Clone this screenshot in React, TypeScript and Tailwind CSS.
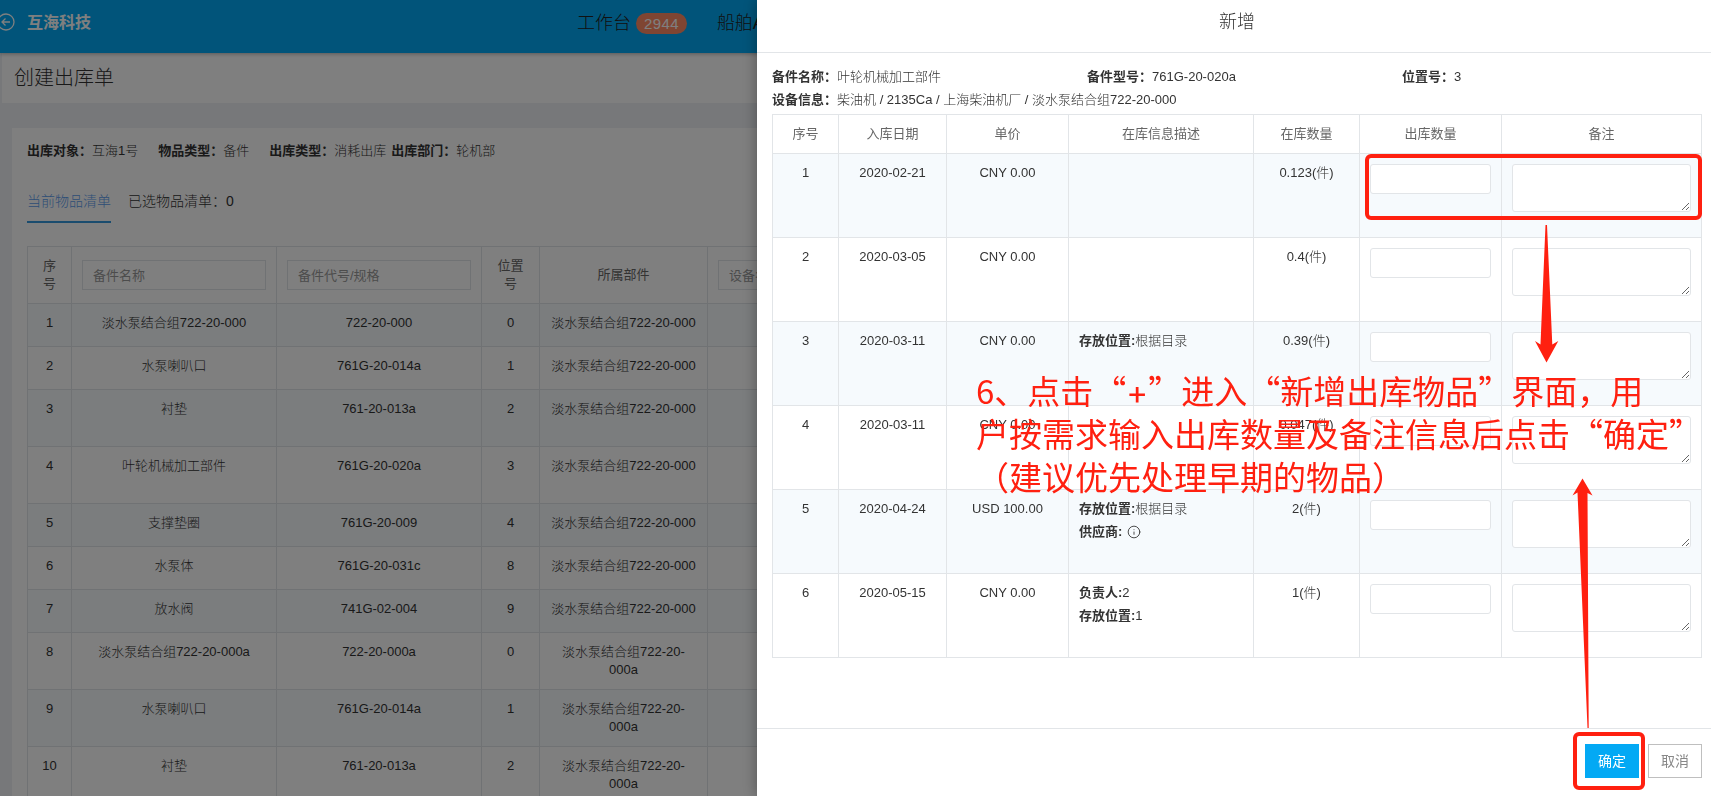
import { Info } from 'lucide-react';

type Part = {
  no: number;
  name: string;
  code: string;
  position: number;
  parent: string;
  tall?: boolean;
};

type Stock = {
  no: number;
  date: string;
  price: string;
  location?: string;
  owner?: string;
  supplier?: boolean;
  amount: string;
};

const parts: Part[] = [
  { no: 1, name: '淡水泵结合组722-20-000', code: '722-20-000', position: 0, parent: '淡水泵结合组722-20-000' },
  { no: 2, name: '水泵喇叭口', code: '761G-20-014a', position: 1, parent: '淡水泵结合组722-20-000' },
  { no: 3, name: '衬垫', code: '761-20-013a', position: 2, parent: '淡水泵结合组722-20-000', tall: true },
  { no: 4, name: '叶轮机械加工部件', code: '761G-20-020a', position: 3, parent: '淡水泵结合组722-20-000', tall: true },
  { no: 5, name: '支撑垫圈', code: '761G-20-009', position: 4, parent: '淡水泵结合组722-20-000' },
  { no: 6, name: '水泵体', code: '761G-20-031c', position: 8, parent: '淡水泵结合组722-20-000' },
  { no: 7, name: '放水阀', code: '741G-02-004', position: 9, parent: '淡水泵结合组722-20-000' },
  { no: 8, name: '淡水泵结合组722-20-000a', code: '722-20-000a', position: 0, parent: '淡水泵结合组722-20-000a', tall: true },
  { no: 9, name: '水泵喇叭口', code: '761G-20-014a', position: 1, parent: '淡水泵结合组722-20-000a', tall: true },
  { no: 10, name: '衬垫', code: '761-20-013a', position: 2, parent: '淡水泵结合组722-20-000a', tall: true },
];

const stocks: Stock[] = [
  { no: 1, date: '2020-02-21', price: 'CNY 0.00', amount: '0.123' },
  { no: 2, date: '2020-03-05', price: 'CNY 0.00', amount: '0.4' },
  { no: 3, date: '2020-03-11', price: 'CNY 0.00', location: '根据目录', amount: '0.39' },
  { no: 4, date: '2020-03-11', price: 'CNY 0.00', amount: '0.047' },
  { no: 5, date: '2020-04-24', price: 'USD 100.00', location: '根据目录', supplier: true, amount: '2' },
  { no: 6, date: '2020-05-15', price: 'CNY 0.00', owner: '2', location: '1', amount: '1' },
];

const filterInput =
  'block h-[30px] w-full border border-[#e0e4e8] bg-white px-[10px] text-[13px] font-normal placeholder:text-[#999]';

const fieldInput = 'block w-full rounded-[3px] border border-[#e2e5e8] bg-white px-2';

const TopBar = () => (
  <header className="relative flex h-[53px] items-start bg-[#03a9f4] pt-[10px] shadow-[0_1px_4px_rgba(0,0,0,0.3)]">
    <div className="flex h-[26px] w-[577px] shrink-0 items-center">
      <a href="#back" aria-label="返回" className="-ml-[3px] mb-[2px] text-white">
        <svg width="18" height="18" viewBox="0 0 18 18" fill="none" stroke="currentColor" strokeWidth="1.3">
          <circle cx="9" cy="9" r="8" />
          <path d="M13 9H5M8.5 5.5 5 9l3.5 3.5" />
        </svg>
      </a>
      <span className="ml-3 text-[16px] font-bold text-white">互海科技</span>
    </div>
    <nav className="flex items-center gap-[30px] whitespace-nowrap text-[18px] font-light leading-[26px] text-[#222]">
      <a href="#workbench" className="flex items-center gap-[5px]">
        工作台
        <span className="rounded-full bg-[#ff8a65] px-2 text-[15px] leading-[21px] tracking-wide text-white">2944</span>
      </a>
      <a href="#ships">船舶AIS</a>
    </nav>
  </header>
);

const PartsTable = () => (
  <table className="mt-[23px] w-[1640px] table-fixed border-collapse text-center text-[13px] leading-[18px] text-[#333]">
    <colgroup>
      <col className="w-[44px]" />
      <col className="w-[205px]" />
      <col className="w-[205px]" />
      <col className="w-[58px]" />
      <col className="w-[168px]" />
      <col className="w-[205px]" />
      <col />
    </colgroup>
    <thead>
      <tr className="h-[57px] text-[#666]">
        <th className="border border-[#e0e4e8] px-[10px] font-normal">序号</th>
        <th className="border border-[#e0e4e8] px-[10px]">
          <input aria-label="备件名称" placeholder="备件名称" className={filterInput} />
        </th>
        <th className="border border-[#e0e4e8] px-[10px]">
          <input aria-label="备件代号/规格" placeholder="备件代号/规格" className={filterInput} />
        </th>
        <th className="border border-[#e0e4e8] px-[10px] font-normal">位置号</th>
        <th className="border border-[#e0e4e8] px-[10px] font-normal">所属部件</th>
        <th className="border border-[#e0e4e8] px-[10px]">
          <input aria-label="设备名称" placeholder="设备名称" className={filterInput} />
        </th>
        <th className="border border-[#e0e4e8]" />
      </tr>
    </thead>
    <tbody className="font-light">
      {parts.map((part) => (
        <tr key={part.no} className={`align-top odd:bg-[#f6fafd] ${part.tall ? 'h-[57px]' : 'h-[43px]'}`}>
          <td className="border border-[#e0e4e8] py-[10px]">{part.no}</td>
          <td className="border border-[#e0e4e8] p-[10px]">{part.name}</td>
          <td className="border border-[#e0e4e8] p-[10px]">{part.code}</td>
          <td className="border border-[#e0e4e8] p-[10px]">{part.position}</td>
          <td className="border border-[#e0e4e8] p-[10px]">{part.parent}</td>
          <td className="border border-[#e0e4e8]" />
          <td className="border border-[#e0e4e8]" />
        </tr>
      ))}
    </tbody>
  </table>
);

const StockTable = () => (
  <table className="mt-[3px] w-full table-fixed border-collapse text-center text-[13px] leading-[23px]">
    <colgroup>
      <col className="w-[66px]" />
      <col className="w-[108px]" />
      <col className="w-[122px]" />
      <col />
      <col className="w-[106px]" />
      <col className="w-[142px]" />
      <col className="w-[200px]" />
    </colgroup>
    <thead>
      <tr className="h-[39px] text-[#666]">
        {['序号', '入库日期', '单价', '在库信息描述', '在库数量', '出库数量', '备注'].map((title) => (
          <th key={title} className="border border-[#e2e5e8] pb-[2px] font-normal">
            {title}
          </th>
        ))}
      </tr>
    </thead>
    <tbody className="text-[#333]">
      {stocks.map((stock) => (
        <tr key={stock.no} className="h-[84px] align-top odd:bg-[#f6fafd]">
          <td className="border border-[#e2e5e8] py-[7px]">{stock.no}</td>
          <td className="border border-[#e2e5e8] py-[7px]">{stock.date}</td>
          <td className="border border-[#e2e5e8] py-[7px]">{stock.price}</td>
          <td className="border border-[#e2e5e8] px-[10px] py-[7px] text-left">
            {stock.owner && (
              <p>
                <b>负责人:</b>
                {stock.owner}
              </p>
            )}
            {stock.location && (
              <p>
                <b>存放位置:</b>
                <span className="font-light">{stock.location}</span>
              </p>
            )}
            {stock.supplier && (
              <p className="flex items-center gap-[5px]">
                <b>供应商:</b>
                <Info size={14} strokeWidth={1.5} />
              </p>
            )}
          </td>
          <td className="border border-[#e2e5e8] py-[7px]">
            {stock.amount}
            <span className="font-light">(件)</span>
          </td>
          <td className="border border-[#e2e5e8] p-[10px]">
            <input aria-label={`出库数量 ${stock.no}`} className={`${fieldInput} h-[30px]`} />
          </td>
          <td className="border border-[#e2e5e8] p-[10px]">
            <textarea aria-label={`备注 ${stock.no}`} className={`${fieldInput} h-[48px] resize`} />
          </td>
        </tr>
      ))}
    </tbody>
  </table>
);

const Drawer = () => (
  <aside className="fixed inset-y-0 right-0 flex w-[954px] max-w-full flex-col bg-white shadow-[0_0_14px_rgba(0,0,0,0.35)]">
    <h2 className="flex h-[53px] shrink-0 items-center justify-center border-b border-[#e2e5e8] pb-2 pl-[6px] text-[18px] font-light text-[#333]">
      新增
    </h2>
    <div className="min-h-0 flex-1 overflow-hidden pl-[15px] pr-[9px] pt-3">
      <div className="grid grid-cols-3 gap-x-[15px] text-[13px] leading-[23px] text-[#333]">
        <p>
          <b>备件名称：</b>
          <span className="font-light">叶轮机械加工部件</span>
        </p>
        <p>
          <b>备件型号：</b>761G-20-020a
        </p>
        <p>
          <b>位置号：</b>3
        </p>
        <p className="col-span-3">
          <b>设备信息：</b>
          <span className="font-light">柴油机 / 2135Ca / 上海柴油机厂 / 淡水泵结合组722-20-000</span>
        </p>
      </div>
      <StockTable />
    </div>
    <footer className="flex h-[68px] shrink-0 items-start justify-end gap-[9px] border-t border-[#e2e5e8] pr-[9px] pt-[15px] text-[14px]">
      <div className="relative">
        <button className="h-[34px] w-[54px] bg-[#03a9f4] text-white">确定</button>
        <span className="pointer-events-none absolute -bottom-3 -left-3 -right-[6px] -top-3 rounded-md border-4 border-[#ff2010]" />
      </div>
      <button className="h-[34px] w-[54px] border border-[#bfbfbf] bg-white text-[#888]">取消</button>
    </footer>
  </aside>
);

// Red guide marks drawn over the drawer
const Guide = () => (
  <div className="pointer-events-none fixed right-0 top-0 h-[796px] w-[954px] text-[#ff2010]">
    <span className="absolute right-[9px] top-[154px] h-[66px] w-[337px] rounded-md border-4 border-current" />
    <svg className="absolute inset-0" width="954" height="796" viewBox="757 0 954 796" fill="currentColor">
      <path d="M1545.500 225h1.500L1552.300 344.500l6-3.500-11.800 21.500-11.500-21.500 5.500 3.500z" />
      <path d="M1587.500 728h1.200L1587.500 493l5 2.500-10-17-10 17 5-3z" />
    </svg>
    <p className="absolute left-[219px] top-[369px] whitespace-nowrap font-['Noto_Sans_CJK_SC',sans-serif] text-[33px] leading-[43px]">
      6、点击“<span className="font-[Inter,sans-serif] leading-none">+</span>”进入“新增出库物品”界面，用
      <br />
      户按需求输入出库数量及备注信息后点击“确定”
      <br />
      （建议优先处理早期的物品）
    </p>
  </div>
);

const App = () => {
  return (
    <div
      lang="zh-CN"
      className="h-screen overflow-hidden bg-[#eef1f5] font-['Liberation_Sans','Noto_Sans_CJK_SC',sans-serif]"
    >
      <TopBar />
      <main className="ml-[2px]">
        <h1 className="flex h-[50px] items-center bg-white pl-3 text-[20px] font-light text-[#333]">创建出库单</h1>
        <section className="ml-[10px] mt-[25px] bg-white px-[15px] pb-5 pt-[14px]">
          <div className="flex whitespace-nowrap text-[13px] leading-[18px] text-[#333]">
            <p className="mr-5">
              <b>出库对象：</b>
              <span className="font-light">互海1号</span>
            </p>
            <p className="mr-5">
              <b>物品类型：</b>
              <span className="font-light">备件</span>
            </p>
            <p className="mr-[5px]">
              <b>出库类型：</b>
              <span className="font-light">消耗出库</span>
            </p>
            <p>
              <b>出库部门：</b>
              <span className="font-light">轮机部</span>
            </p>
          </div>
          <div className="mt-[22px] flex gap-[17px] text-[14px] font-light leading-[39px]">
            <button className="border-b-2 border-[#3598dc] text-[#5c9ded]">当前物品清单</button>
            <button className="border-b-2 border-transparent text-[#333]">已选物品清单：0</button>
          </div>
          <PartsTable />
        </section>
      </main>
      <div className="fixed inset-0 bg-black/50" />
      <Drawer />
      <Guide />
    </div>
  );
};

export default App;
